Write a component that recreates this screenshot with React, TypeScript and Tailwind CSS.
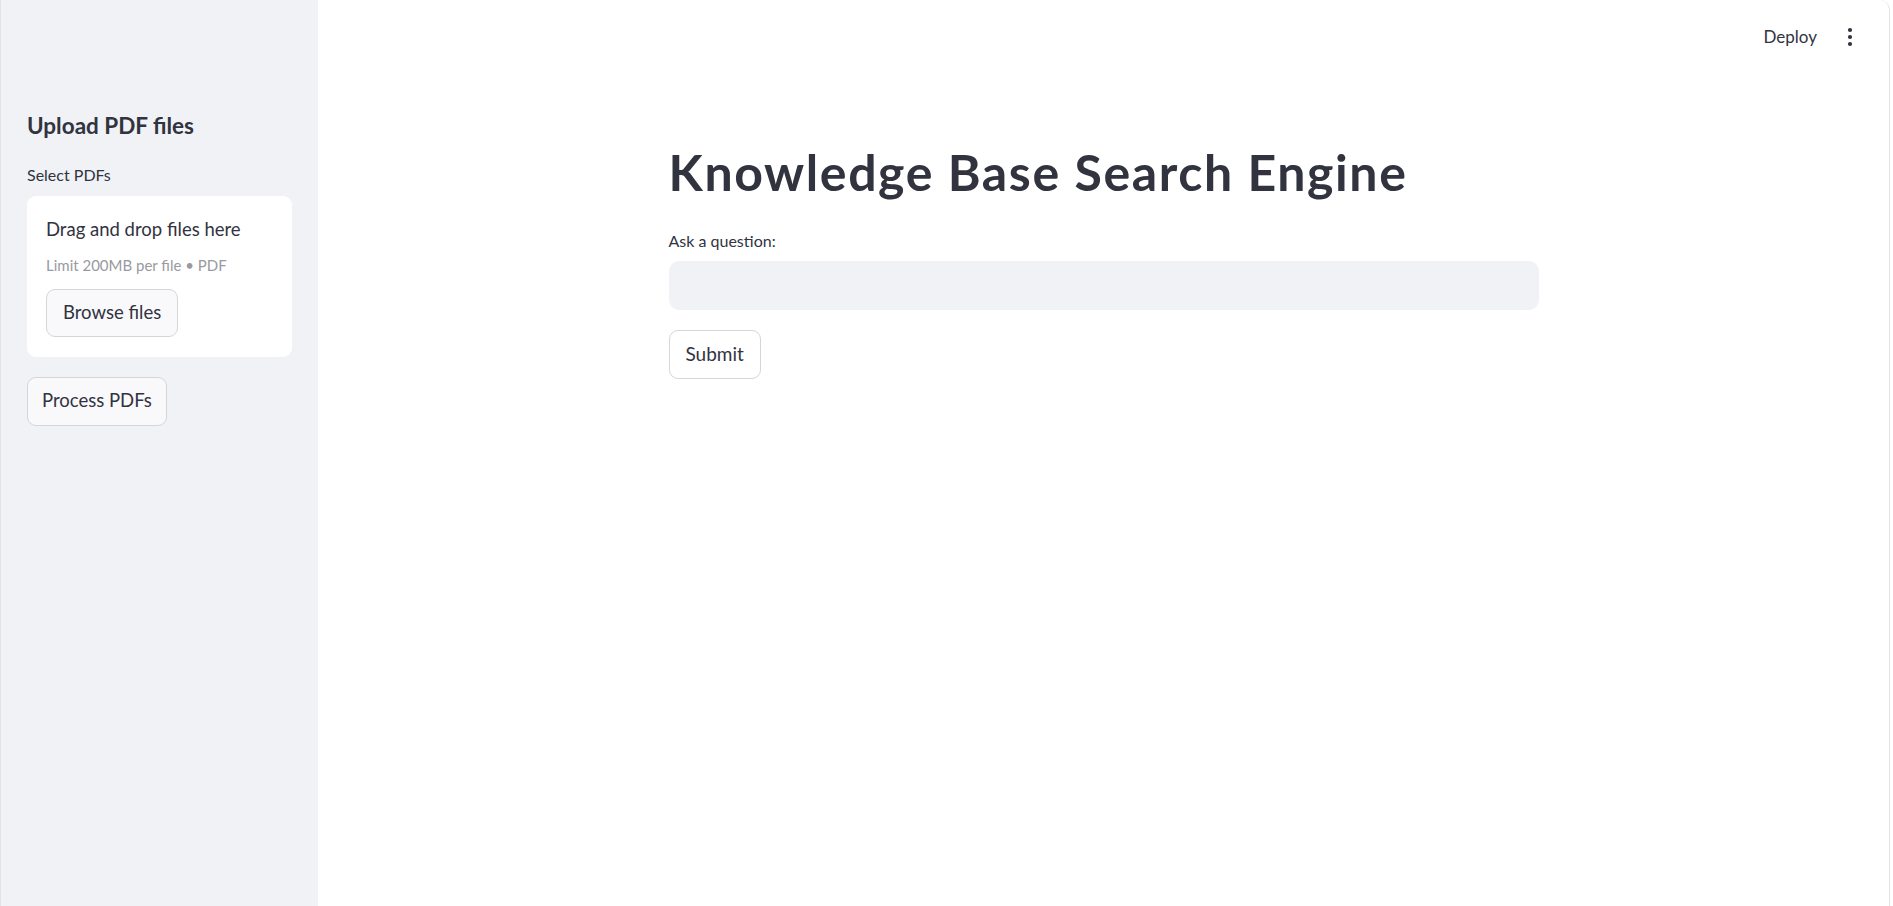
const DotsIcon = () => (
  <svg width="6" height="20" viewBox="0 0 6 20" fill="#31333f">
    <circle cx="3" cy="3" r="2.1" />
    <circle cx="3" cy="10" r="2.1" />
    <circle cx="3" cy="17" r="2.1" />
  </svg>
);

const Sidebar = () => {
  return (
    <aside className="w-[317px] shrink-0 bg-[#f0f2f6] px-[26px] pt-[112px]">
      <h2 className="text-[22.5px] leading-[1.2] font-bold">Upload PDF files</h2>
      <p className="mt-[24px] text-[16px] leading-[24px]">Select PDFs</p>
      <div className="mt-[9px] w-[265px] rounded-[9px] bg-white px-[19px] pt-[19px] pb-[20px]">
        <p className="text-[18.5px] leading-[28.5px]">Drag and drop files here</p>
        <p className="mt-[10px] text-[15px] leading-[22px] text-[#989aa0]">Limit 200MB per file • PDF</p>
        <button className="mt-[13px] h-[48px] rounded-[9px] border border-[#d5d6d9] bg-[#f9f9fb] px-[16px] text-[18.5px]">
          Browse files
        </button>
      </div>
      <button className="mt-[20px] h-[49px] rounded-[9px] border border-[#d5d6d9] bg-[#f9f9fb] px-[14px] text-[18.5px]">
        Process PDFs
      </button>
    </aside>
  );
};

export default function App() {
  return (
    <div className="flex h-[906px] w-[1890px] overflow-hidden rounded-tr-[10px] border-x border-[#e3e3e6] bg-white font-['Lato',sans-serif] text-[#31333f]">
      <Sidebar />
      <main className="flex flex-1 flex-col">
        <div className="flex h-[74px] items-center justify-end gap-[30px] pr-[36px]">
          <span className="text-[17px]">Deploy</span>
          <DotsIcon />
        </div>
        <div className="mx-auto mt-[68px] w-[870px]">
          <h1 className="text-[50px] leading-[1.2] font-bold tracking-[1.6px]">Knowledge Base Search Engine</h1>
          <label className="mt-[27px] block text-[16px] leading-[24px]">Ask a question:</label>
          <input
            type="text"
            className="mt-[8px] block h-[49px] w-full rounded-[10px] bg-[#f0f2f6] px-[14px] text-[19px] outline-none"
          />
          <button className="mt-[20px] h-[49px] rounded-[9px] border border-[#d5d6d9] bg-white px-[16px] text-[19px]">
            Submit
          </button>
        </div>
      </main>
    </div>
  );
}
